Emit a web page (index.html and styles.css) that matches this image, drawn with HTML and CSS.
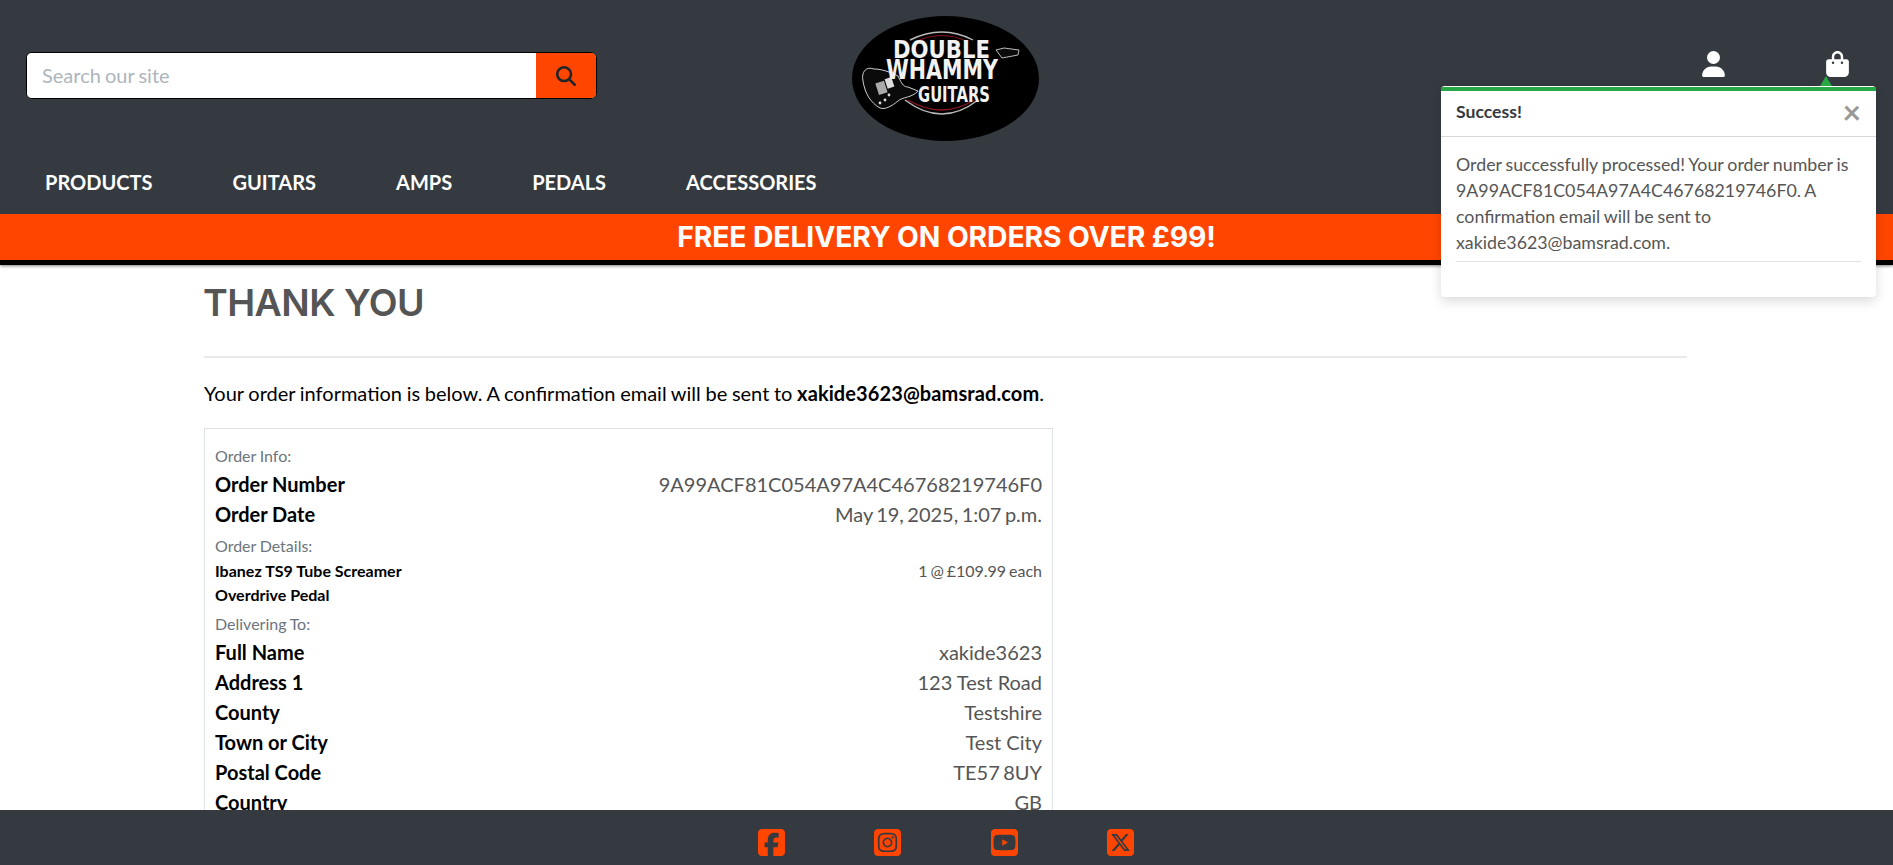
FILE: index.html
```html
<!DOCTYPE html>
<html lang="en">
<head>
<meta charset="utf-8">
<title>Double Whammy Guitars</title>
<link rel="stylesheet" href="styles.css">
</head>
<body>
<div class="page">
  <header class="site-header">
    <div class="topbar">
      <form class="search">
        <input class="search-input" type="text" placeholder="Search our site">
        <button class="search-btn" type="button" aria-label="Search">
          <svg viewBox="0 0 512 512" class="search-icon"><path d="M416 208c0 45.9-14.9 88.3-40 122.7L502.6 457.4c12.5 12.5 12.5 32.8 0 45.3s-32.8 12.5-45.3 0L330.7 376c-34.4 25.2-76.8 40-122.7 40C93.1 416 0 322.9 0 208S93.1 0 208 0S416 93.1 416 208zM208 352a144 144 0 1 0 0-288 144 144 0 1 0 0 288z"/></svg>
        </button>
      </form>
      <a class="logo" href="#" aria-label="Double Whammy Guitars">
        <svg viewBox="0 0 187 125" width="187" height="125">
          <ellipse cx="93.5" cy="62.5" rx="93.5" ry="62.5" fill="#000"/>
          <path d="M58 24 Q90 8 121 24" fill="none" stroke="#bbb" stroke-width="1.4"/>
          <path d="M63 26 Q90 13 116 26" fill="none" stroke="#8a1420" stroke-width="1.2"/>
          <path d="M56 84 Q90 104 122 84" fill="none" stroke="#8a1420" stroke-width="1.4"/>
          <path d="M53 84 Q90 112 126 84" fill="none" stroke="#bbb" stroke-width="1.4"/>
          <path d="M22 53 C14 50 9 56 11 65 C13 78 19 87 28 92 C33 94 40 90 46 85 C50 81 60 82 66 75 L56 71 C52 71 50 68 48 64 L46 60 C38 56 30 53 22 53Z" fill="#0b0b0b" stroke="#ccc" stroke-width="1"/>
          <rect x="25" y="66" width="9" height="12" fill="#aaa" transform="rotate(-18 29 72)"/>
          <rect x="34" y="62" width="7" height="10" fill="#ddd" transform="rotate(-18 37 67)"/>
          <circle cx="28" cy="87" r="1.4" fill="#ddd"/><circle cx="33" cy="84" r="1.4" fill="#ddd"/><circle cx="37" cy="79" r="1.4" fill="#ddd"/>
          <path d="M144 34 L150 42 L166 39 L167 34 L152 32 Z" fill="#0b0b0b" stroke="#bbb" stroke-width="1"/>
          <text x="41" y="42" class="logo-text" font-size="25" textLength="97" lengthAdjust="spacingAndGlyphs">DOUBLE</text>
          <text x="34" y="63" class="logo-text" font-size="27" textLength="112" lengthAdjust="spacingAndGlyphs">WHAMMY</text>
          <text x="66" y="86" class="logo-text" font-size="22" textLength="72" lengthAdjust="spacingAndGlyphs">GUITARS</text>
        </svg>
      </a>
      <div class="account">
        <svg viewBox="0 0 448 512" class="top-icon"><path d="M224 256A128 128 0 1 0 224 0a128 128 0 1 0 0 256zm-45.7 48C79.8 304 0 383.8 0 482.3C0 498.7 13.3 512 29.7 512H418.3c16.4 0 29.7-13.3 29.7-29.7C448 383.8 368.2 304 269.7 304H178.3z"/></svg>
        <svg viewBox="0 0 448 512" class="top-icon"><path d="M160 112c0-35.3 28.7-64 64-64s64 28.7 64 64v48H160V112zm-48 48H48c-26.5 0-48 21.5-48 48V416c0 53 43 96 96 96H352c53 0 96-43 96-96V208c0-26.5-21.5-48-48-48H336V112C336 50.1 285.9 0 224 0S112 50.1 112 112v48zm24 48a24 24 0 1 1 0 48 24 24 0 1 1 0-48zm152 24a24 24 0 1 1 48 0 24 24 0 1 1-48 0z"/></svg>
      </div>
    </div>
    <nav class="mainnav">
      <a href="#">Products</a>
      <a href="#">Guitars</a>
      <a href="#">Amps</a>
      <a href="#">Pedals</a>
      <a href="#">Accessories</a>
    </nav>
    <div class="banner">FREE DELIVERY ON ORDERS OVER £99!</div>
  </header>

  <main class="content">
    <div class="container">
      <h1 class="title">THANK YOU</h1>
      <hr class="rule">
      <p class="intro">Your order information is below. A confirmation email will be sent to <strong>xakide3623@bamsrad.com</strong>.</p>
      <section class="order-box">
        <p class="section-label first">Order Info:</p>
        <div class="row"><span class="key">Order Number</span><span class="val">9A99ACF81C054A97A4C46768219746F0</span></div>
        <div class="row"><span class="key">Order Date</span><span class="val tight">May 19, 2025, 1:07 p.m.</span></div>
        <p class="section-label">Order Details:</p>
        <div class="item"><span class="item-name">Ibanez TS9 Tube Screamer Overdrive Pedal</span><span class="item-qty">1 @ £109.99 each</span></div>
        <p class="section-label">Delivering To:</p>
        <div class="row"><span class="key">Full Name</span><span class="val">xakide3623</span></div>
        <div class="row"><span class="key">Address 1</span><span class="val">123 Test Road</span></div>
        <div class="row"><span class="key">County</span><span class="val">Testshire</span></div>
        <div class="row"><span class="key">Town or City</span><span class="val">Test City</span></div>
        <div class="row"><span class="key">Postal Code</span><span class="val tight">TE57 8UY</span></div>
        <div class="row"><span class="key">Country</span><span class="val">GB</span></div>
      </section>
    </div>
  </main>

  <footer class="site-footer">
    <svg viewBox="0 0 448 512" class="social"><path d="M64 32C28.7 32 0 60.7 0 96V416c0 35.3 28.7 64 64 64h98.2V334.2H109.4V256h52.8V222.3c0-87.1 39.4-127.5 125-127.5c16.2 0 44.2 3.2 55.7 6.4V172c-6-.6-16.5-1-29.6-1c-42 0-58.2 15.9-58.2 57.2V256h83.6l-14.4 78.2H255V480H384c35.3 0 64-28.7 64-64V96c0-35.3-28.7-64-64-64H64z"/></svg>
    <svg viewBox="0 0 448 512" class="social"><path d="M194.4 211.7a53.3 53.3 0 1 0 59.3 88.7 53.3 53.3 0 1 0 -59.3-88.7zm142.3-68.4c-5.2-5.2-11.5-9.3-18.4-12c-18.1-7.1-57.6-6.8-83.1-6.5c-4.1 0-7.9 .1-11.2 .1c-3.3 0-7.2 0-11.4-.1c-25.5-.3-64.8-.7-82.9 6.5c-6.9 2.7-13.1 6.8-18.4 12s-9.3 11.5-12 18.4c-7.1 18.1-6.7 57.7-6.5 83.2c0 4.1 .1 7.9 .1 11.1s0 7-.1 11.1c-.2 25.5-.6 65.1 6.5 83.2c2.7 6.9 6.8 13.1 12 18.4s11.5 9.3 18.4 12c18.1 7.1 57.6 6.8 83.1 6.5c4.1 0 7.9-.1 11.2-.1c3.3 0 7.2 0 11.4 .1c25.5 .3 64.8 .7 82.9-6.5c6.9-2.7 13.1-6.8 18.4-12s9.3-11.5 12-18.4c7.2-18 6.8-57.4 6.5-83c0-4.2-.1-8.1-.1-11.4s0-7.1 .1-11.4c.3-25.5 .7-64.9-6.5-83l0 0c-2.7-6.9-6.8-13.1-12-18.4zm-67.1 44.5A82 82 0 1 1 178.4 324.2a82 82 0 1 1 91.1-136.4zm29.2-1.3c-3.1-2.1-5.6-5.1-7.1-8.6s-1.8-7.3-1.1-11.1s2.6-7.1 5.2-9.8s6.1-4.5 9.8-5.2s7.6-.4 11.1 1.1s6.5 3.9 8.6 7s3.2 6.8 3.2 10.6c0 2.5-.5 5-1.4 7.3s-2.4 4.4-4.1 6.2s-3.9 3.2-6.2 4.2s-4.8 1.5-7.3 1.5l0 0c-3.8 0-7.5-1.1-10.6-3.2zM448 96c0-35.3-28.7-64-64-64H64C28.7 32 0 60.7 0 96V416c0 35.3 28.7 64 64 64H384c35.3 0 64-28.7 64-64V96zM357 389c-18.7 18.7-41.4 24.6-67 25.9c-26.4 1.5-105.6 1.5-132 0c-25.6-1.3-48.3-7.2-67-25.9s-24.6-41.4-25.8-67c-1.5-26.4-1.5-105.6 0-132c1.3-25.6 7.1-48.3 25.8-67s41.5-24.6 67-25.8c26.4-1.5 105.6-1.5 132 0c25.6 1.3 48.3 7.1 67 25.8s24.6 41.4 25.8 67c1.5 26.3 1.5 105.4 0 131.9c-1.3 25.6-7.1 48.3-25.8 67z"/></svg>
    <svg viewBox="0 0 448 512" class="social"><path d="M282 256.2l-95.2-54.1V310.3L282 256.2zM384 32H64C28.7 32 0 60.7 0 96V416c0 35.3 28.7 64 64 64H384c35.3 0 64-28.7 64-64V96c0-35.3-28.7-64-64-64zm14.4 136.1c7.6 28.6 7.6 88.2 7.6 88.2s0 59.6-7.6 88.1c-4.2 15.8-16.5 27.7-32.2 31.9C337.9 384 224 384 224 384s-113.9 0-142.2-7.6c-15.7-4.2-28-16.1-32.2-31.9C42 315.9 42 256.3 42 256.3s0-59.7 7.6-88.2c4.2-15.8 16.5-28.2 32.2-32.4C110.1 128 224 128 224 128s113.9 0 142.2 7.7c15.7 4.2 28 16.6 32.2 32.4z"/></svg>
    <svg viewBox="0 0 448 512" class="social"><path d="M64 32C28.7 32 0 60.7 0 96V416c0 35.3 28.7 64 64 64H384c35.3 0 64-28.7 64-64V96c0-35.3-28.7-64-64-64H64zm297.1 84L257.3 234.6 379.4 396H283.8L209 298.1 123.3 396H75.8l111-126.9L69.7 116h98l67.7 89.5L313.6 116h47.5zM323.3 367.6L153.4 142.9H125.1L296.9 367.6h26.3z"/></svg>
  </footer>

  <aside class="toast">
    <span class="toast-arrow"></span>
    <div class="toast-head"><strong class="toast-title">Success!</strong><span class="toast-close">×</span></div>
    <div class="toast-body">
      <p class="toast-text">Order successfully processed! Your order number is 9A99ACF81C054A97A4C46768219746F0. A confirmation email will be sent to xakide3623@bamsrad.com.</p>
      <hr class="toast-rule">
    </div>
  </aside>
</div>
</body>
</html>
```
FILE: styles.css
```css
* { box-sizing: border-box; }
html, body { margin: 0; height: 100%; }
body { font-family: Lato, "Liberation Sans", sans-serif; color: #555; background: #fff; }

.page { position: relative; height: 865px; display: flex; flex-direction: column; overflow: hidden; }

.site-header { flex: none; background: #343a40; position: relative; z-index: 2; box-shadow: 0 1px 3px rgba(0,0,0,.5); }

.topbar { height: 158px; display: grid; grid-template-columns: 1fr auto 1fr; align-items: start; padding: 0 28px 0 26px; }

.search { width: 571px; height: 47px; margin-top: 52px; display: flex; border: 1px solid #000; border-radius: 6px; overflow: hidden; background: #fff; }
.search-input { flex: 1; min-width: 0; border: 0; outline: 0; padding: 0 15px 2px; font: 400 20px Lato, sans-serif; word-spacing: -1px; color: #333; }
.search-input::placeholder { color: #adb5bd; opacity: 1; }
.search-btn { width: 60px; border: 0; padding: 0; background: #ff4500; display: flex; align-items: center; justify-content: center; }
.search-icon { width: 20px; height: 20px; fill: #212529; }

.logo { margin-top: 16px; display: block; line-height: 0; }
.logo-text { font-family: "DejaVu Sans", sans-serif; font-weight: 700; fill: #f2f2f2; }

.account { justify-self: end; display: flex; gap: 101px; margin-top: 51px; padding-right: 16px; }
.top-icon { width: 23px; height: 26px; fill: #fff; }

.mainnav { height: 56px; display: flex; gap: 80px; padding: 9px 0 0 45px; }
.mainnav a { color: #fff; font-size: 20px; font-weight: 700; text-transform: uppercase; text-decoration: none; line-height: 30px; height: 30px; }

.banner { height: 51px; background: #ff4500; border-bottom: 5px solid #000; color: #fff; font-family: Inter, "Liberation Sans", sans-serif; font-size: 28.3px; font-weight: 700; letter-spacing: -.1px; text-align: center; line-height: 46px; }

.content { flex: 1; min-height: 0; overflow: hidden; }
.container { width: 1483px; margin-left: 204px; }

.title { margin: 0 0 0 -1px; padding-top: 16px; font-family: Inter, "Liberation Sans", sans-serif; font-size: 37.5px; font-weight: 600; letter-spacing: -.55px; line-height: 44px; color: #555; }
.rule { margin: 31px 0 0; border: 0; border-top: 2px solid #e9e9e9; }
.intro { margin: 20px 0 0; font-size: 20px; line-height: 30px; color: #000; word-spacing: -.46px; }
.intro strong { font-weight: 700; letter-spacing: .1px; word-spacing: 0; }

.order-box { width: 849px; margin-top: 20px; padding: 8px 10px 8px; border: 1px solid #dee2e6; }
.section-label { margin: 5px 0 1px; font-size: 16px; line-height: 24px; color: #6c757d; word-spacing: -.5px; }
.section-label.first { margin-top: 7px; }
.row { display: flex; justify-content: space-between; font-size: 20px; line-height: 30px; }
.key { font-weight: 700; color: #000; }
.val { color: #555; }
.val.tight { word-spacing: -1.7px; }
.item { display: flex; justify-content: space-between; font-size: 16px; line-height: 24px; }
.item-name { width: 230px; font-weight: 700; color: #000; }
.item-qty { color: #555; word-spacing: -1.2px; }

.site-footer { flex: none; height: 55px; background: #343a40; display: flex; justify-content: center; gap: 89.5px; padding: 17px 1px 0 0; position: relative; z-index: 2; }
.social { width: 27px; height: 31px; fill: #ff4500; }

.toast { position: absolute; z-index: 5; left: 1441px; top: 86px; width: 435px; height: 211px; background: #fff; border-top: 1px solid #fff; border-radius: 4px; box-shadow: 0 4px 12px rgba(0,0,0,.15); }
.toast-arrow { position: absolute; left: 379px; top: -11px; width: 0; height: 0; border-left: 6px solid transparent; border-right: 6px solid transparent; border-bottom: 10px solid #28a745; }
.toast-head { height: 50px; border-top: 4px solid #28a745; border-bottom: 1px solid #d8d8d8; padding: 0 15px 4px; display: flex; align-items: center; justify-content: space-between; }
.toast-title { font-size: 17.6px; font-weight: 700; color: #343a40; }
.toast-close { font-size: 32px; font-weight: 700; line-height: 1; color: #999; }
.toast-body { padding: 14px 15px 0; }
.toast-text { margin: 0; font-size: 17.8px; line-height: 26px; color: #555; word-spacing: -.7px; }
.toast-rule { margin: 6px 0 0; border: 0; border-top: 1px solid #e3e3e3; }
```
